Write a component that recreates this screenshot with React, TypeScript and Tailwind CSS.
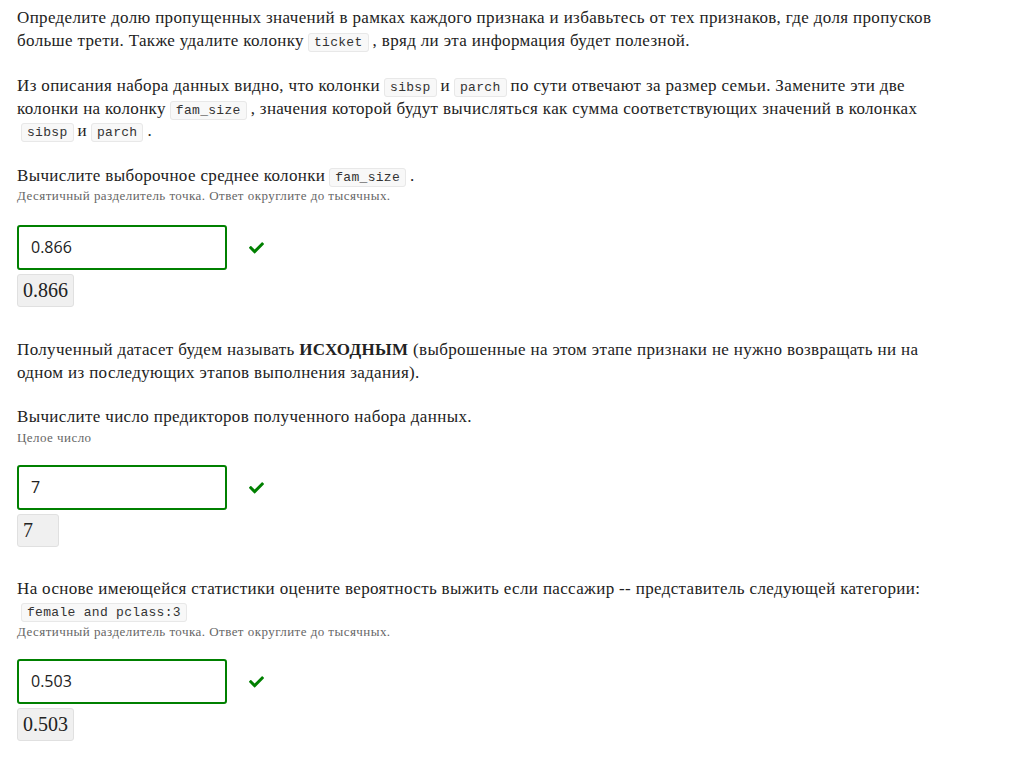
import React from 'react'

const Code: React.FC<{ children: React.ReactNode }> = ({ children }) => (
  <code className="mx-[4px] rounded-[3px] border border-[#e8e8e8] bg-[#f8f8f8] px-[5px] py-[1px] font-['Liberation_Mono',monospace] text-[13px] leading-none tracking-[0.3px] text-[#333]">
    {children}
  </code>
)

const Check = () => (
  <svg viewBox="0 0 512 420" className="h-[13px] w-[15px] fill-[#008000]">
    <path d="M173.9 403.4l-166.4-166.4c-10-10-10-26.2 0-36.2l36.2-36.2c10-10 26.2-10 36.2 0L192 276.7 432.1 36.6c10-10 26.2-10 36.2 0l36.2 36.2c10 10 10 26.2 0 36.2l-294.4 294.4c-10 10-26.2 10-36.2 0z" />
  </svg>
)

const Answer: React.FC<{ value: string }> = ({ value }) => (
  <div className="flex flex-col items-start">
    <div className="flex items-center gap-[22px]">
      <div className="flex h-[45px] w-[210px] items-center rounded-[3px] border-2 border-[#008000] bg-white px-[12px] font-['Open_Sans',sans-serif] text-[16px] tracking-normal text-[#222]">
        {value}
      </div>
      <Check />
    </div>
    <div className="mt-[4px] min-w-[42px] rounded-[3px] border border-[#e0e0e0] bg-[#f0f0f0] px-[5px] py-[3px] font-['Liberation_Serif',serif] text-[20px] leading-[25px] tracking-normal text-[#222]">
      {value}
    </div>
  </div>
)

const Hint: React.FC<{ children: React.ReactNode }> = ({ children }) => (
  <p className="text-[13px] leading-[18px] tracking-[0.45px] text-[#666]">{children}</p>
)

export default function App() {
  return (
    <div className="min-h-[760px] bg-white px-[17px] pt-[7px] font-['Liberation_Serif',serif] text-[17px] leading-[22.5px] tracking-[0.35px] text-[#222]">
      <div className="w-[945px]">
        <p>
          Определите долю пропущенных значений в рамках каждого признака и избавьтесь от тех признаков, где доля
          пропусков больше трети. Также удалите колонку<Code>ticket</Code>, вряд ли эта информация будет полезной.
        </p>
        <p className="mt-[23px]">
          Из описания набора данных видно, что колонки<Code>sibsp</Code>и<Code>parch</Code>по сути отвечают за
          размер семьи. Замените эти две колонки на колонку<Code>fam_size</Code>, значения которой будут
          вычисляться как сумма соответствующих значений в колонках <Code>sibsp</Code>и<Code>parch</Code>.
        </p>
        <p className="mt-[22px]">
          Вычислите выборочное среднее колонки<Code>fam_size</Code>.
        </p>
        <Hint>Десятичный разделитель точка. Ответ округлите до тысячных.</Hint>
        <div className="mt-[20px]">
          <Answer value="0.866" />
        </div>
        <p className="mt-[32px]">
          Полученный датасет будем называть <b>ИСХОДНЫМ</b> (выброшенные на этом этапе признаки не нужно
          возвращать ни на одном из последующих этапов выполнения задания).
        </p>
        <p className="mt-[22px]">Вычислите число предикторов полученного набора данных.</p>
        <Hint>Целое число</Hint>
        <div className="mt-[18px]">
          <Answer value="7" />
        </div>
        <p className="mt-[31px]">
          На основе имеющейся статистики оцените вероятность выжить если пассажир -- представитель следующей
          категории: <Code>female and pclass:3</Code>
        </p>
        <Hint>Десятичный разделитель точка. Ответ округлите до тысячных.</Hint>
        <div className="mt-[18px]">
          <Answer value="0.503" />
        </div>
      </div>
    </div>
  )
}
